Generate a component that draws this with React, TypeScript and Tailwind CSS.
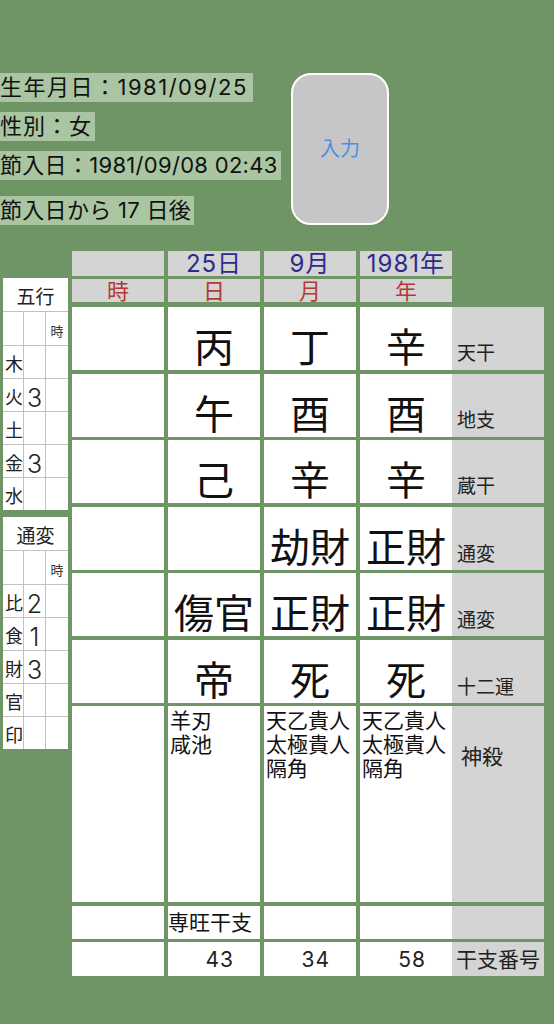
const INFO = [
  { text: "生年月日：1981/09/25", cls: "mt-0 tracking-[1.5px] pr-[5px]" },
  { text: "性別：女", cls: "mt-[10px] tracking-[1px] pr-[3px]" },
  { text: "節入日：1981/09/08 02:43", cls: "mt-[10px] tracking-[0.3px] pr-[3px]" },
  { text: "節入日から 17 日後", cls: "mt-[16px] tracking-[0.3px] pr-[3px]" },
];

const MAIN_ROWS = [
  { cells: ["", "丙", "丁", "辛"], label: "天干", pb: "pb-[7px]" },
  { cells: ["", "午", "酉", "酉"], label: "地支", pb: "pb-[7px]" },
  { cells: ["", "己", "辛", "辛"], label: "蔵干", pb: "pb-[7px]" },
  { cells: ["", "", "劫財", "正財"], label: "通変", pb: "pb-[6px]" },
  { cells: ["", "傷官", "正財", "正財"], label: "通変", pb: "pb-[6px]" },
  { cells: ["", "帝", "死", "死"], label: "十二運", pb: "pb-[6px]" },
];

const SHINSATSU = [[], ["羊刃", "咸池"], ["天乙貴人", "太極貴人", "隔角"], ["天乙貴人", "太極貴人", "隔角"]];

function SmallTable({ title, rows }: { title: string; rows: [string, string][] }) {
  return (
    <div className="w-[65px] bg-white">
      <div className="h-[33px] flex items-end justify-center pb-[4px] text-[19px] leading-none text-[#222]">
        {title}
      </div>
      <div className="h-[34px] grid grid-cols-[21px_22px_22px] border-t border-[#c2c2c2]">
        <div className="border-r border-[#c2c2c2]" />
        <div className="border-r border-[#c2c2c2]" />
        <div className="flex items-center justify-center pt-[6px] text-[13px] leading-none text-[#333]">時</div>
      </div>
      {rows.map(([k, v]) => (
        <div key={k} className="h-[33px] grid grid-cols-[21px_22px_22px] border-t border-[#c2c2c2]">
          <div className="border-r border-[#c2c2c2] flex items-end pl-[2px] pb-[4px] text-[18px] leading-none text-[#222]">
            {k}
          </div>
          <div className="border-r border-[#c2c2c2] flex items-end justify-center text-[25px] font-light leading-none text-[#222]">
            {v}
          </div>
          <div />
        </div>
      ))}
    </div>
  );
}

export default function App() {
  return (
    <div className="w-full h-[1024px] bg-[#6f9566] overflow-hidden text-[#111] font-[family-name:Inter,'Noto_Sans_CJK_JP',sans-serif]">
      {/* top info */}
      <div className="flex pt-[73px]">
        <div className="w-[291px] flex flex-col items-start">
          {INFO.map((l) => (
            <div key={l.text} className={`${l.cls} h-[29px] leading-[29px] bg-[#a9c5a1] text-[22px] whitespace-nowrap`}>
              {l.text}
            </div>
          ))}
        </div>
        <button className="w-[98px] h-[152px] rounded-[20px] border-2 border-white bg-[#c6c6c8] text-[20px] text-[#4a8fe0]">
          入力
        </button>
      </div>

      {/* chart */}
      <div className="flex items-start mt-[26px]">
        <div className="ml-[3px] mt-[27px] w-[65px] flex flex-col gap-[7px]">
          <SmallTable title="五行" rows={[["木", ""], ["火", "3"], ["土", ""], ["金", "3"], ["水", ""]]} />
          <SmallTable title="通変" rows={[["比", "2"], ["食", "1"], ["財", "3"], ["官", ""], ["印", ""]]} />
        </div>

        <div className="ml-[4px] flex flex-col">
          <div className="flex gap-1">
            {["", "25日", "9月", "1981年"].map((t, i) => (
              <div key={i} className="w-[92px] h-[25px] bg-[#d4d4d4] flex items-end justify-center text-[24px] tracking-[1px] leading-none text-[#2b2b8e] whitespace-nowrap">
                {t}
              </div>
            ))}
          </div>
          <div className="flex gap-1 mt-[3px]">
            {["時", "日", "月", "年"].map((t) => (
              <div key={t} className="w-[92px] h-[23px] bg-[#d4d4d4] flex items-end justify-center text-[22px] leading-none text-[#b33b37]">
                {t}
              </div>
            ))}
          </div>

          <div className="flex flex-col gap-[3.5px] mt-[5px]">
            {MAIN_ROWS.map((r, ri) => (
              <div key={ri} className="flex">
                <div className="flex gap-1">
                  {r.cells.map((c, ci) => (
                    <div key={ci} className="w-[92px] h-[63px] bg-white flex items-end justify-center pb-[2px] text-[40px] leading-none whitespace-nowrap">
                      {c}
                    </div>
                  ))}
                </div>
                <div className={`w-[92px] h-[63px] bg-[#d4d4d4] flex items-end pl-[5px] ${r.pb} text-[19px] leading-none text-[#222]`}>
                  {r.label}
                </div>
              </div>
            ))}

            <div className="flex">
              <div className="flex gap-1">
                {SHINSATSU.map((lines, ci) => (
                  <div key={ci} className="w-[92px] h-[196px] bg-white pt-[3px] pl-[2px] text-[21px] leading-[24px] whitespace-nowrap">
                    {lines.map((l) => (
                      <div key={l}>{l}</div>
                    ))}
                  </div>
                ))}
              </div>
              <div className="w-[92px] h-[196px] bg-[#d4d4d4] pt-[40px] pl-[9px] text-[21px] leading-none text-[#222]">神殺</div>
            </div>

            <div className="flex">
              <div className="flex gap-1">
                {["", "専旺干支", "", ""].map((t, ci) => (
                  <div key={ci} className="w-[92px] h-[33px] bg-white flex items-center text-[21px] leading-none whitespace-nowrap">
                    {t}
                  </div>
                ))}
              </div>
              <div className="w-[92px] h-[33px] bg-[#d4d4d4]" />
            </div>

            <div className="flex">
              <div className="flex gap-1">
                {["", "43", "34", "58"].map((t, ci) => (
                  <div key={ci} className="w-[92px] h-[34px] bg-white flex items-center justify-end pr-[26px] text-[21px] tracking-[1px] leading-none text-[#222]">
                    {t}
                  </div>
                ))}
              </div>
              <div className="w-[92px] h-[34px] bg-[#d4d4d4] flex items-center pl-[4px] text-[21px] leading-none text-[#222] whitespace-nowrap">
                干支番号
              </div>
            </div>
          </div>
        </div>
      </div>
    </div>
  );
}
